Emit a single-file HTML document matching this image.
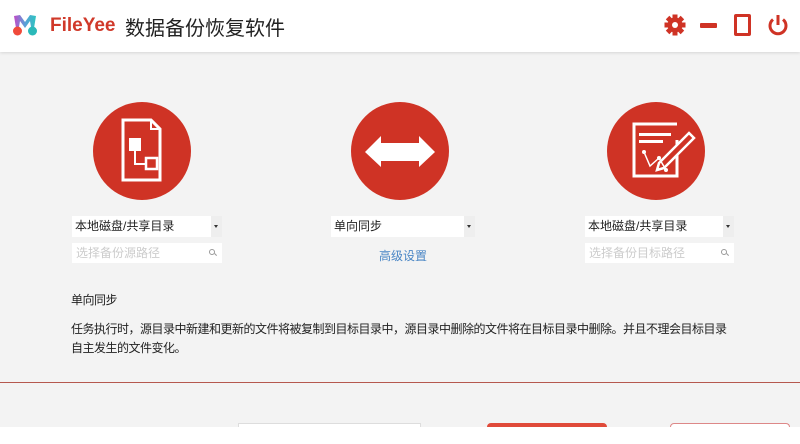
<!DOCTYPE html>
<html><head><meta charset="utf-8"><style>
*{margin:0;padding:0;box-sizing:border-box}
html,body{width:800px;height:444px;overflow:hidden}
body{background:#f3f3f3;font-family:"Liberation Sans","Noto Sans CJK SC",sans-serif;position:relative}
.hdr{position:absolute;left:0;top:0;width:800px;height:52px;background:#fff;box-shadow:0 1px 3px rgba(0,0,0,.12)}
.abs{position:absolute}
.circ{position:absolute;width:98px;height:98px;border-radius:50%;background:#cf3325}
.sel{position:absolute;height:21px;background:#fff;font-size:12px;color:#222;line-height:21px;padding-left:3px}
.sel i{position:absolute;right:0;top:0;width:11px;height:21px;background:#eee}
.sel i:after{content:"";position:absolute;left:3px;top:9px;border:2.5px solid transparent;border-top:3px solid #333}
.inp{position:absolute;height:20px;background:#fff;font-size:12px;color:#ccc;line-height:20px;padding-left:4px}
.inp b{position:absolute;right:7px;top:6px;width:6px;height:6px;border:1.3px solid #999;border-radius:50%}
.inp b:after{content:"";position:absolute;left:4px;top:4px;width:3px;height:1.3px;background:#999;transform:rotate(45deg)}
.txt{position:absolute;left:71px;font-size:12px;color:#222;white-space:nowrap;letter-spacing:-0.5px}
</style></head><body>
<div class="hdr">
<svg class="abs" style="left:11px;top:14px" width="28" height="24" viewBox="0 0 28 24">
<defs><linearGradient id="g" x1="0" y1="0" x2="1" y2="0"><stop offset="0" stop-color="#c04bc8"/><stop offset=".5" stop-color="#5aa0d8"/><stop offset="1" stop-color="#2ec4c0"/></linearGradient></defs>
<path d="M3 2 L9 1 L14 8 L19 1 L25 2 L23 14 L20 13 L19 7 L14 14 L9 7 L8 13 L5 14Z" fill="url(#g)"/>
<circle cx="6.5" cy="17" r="4.5" fill="#f04a3a"/><circle cx="21.5" cy="17" r="4.5" fill="#2bb9b9"/>
</svg>
<div class="abs" style="left:50px;top:15px;font-size:19px;font-weight:bold;color:#d0392a">FileYee</div>
<div class="abs" style="left:125px;top:12px;font-size:20px;color:#222">数据备份恢复软件</div>
<svg class="abs" style="left:663px;top:13px" width="24" height="24" viewBox="0 0 24 24"><g fill="#cf3325"><circle cx="12" cy="12" r="7.5"/><g id="t"><rect x="9.5" y="1.5" width="5" height="5"/><rect x="9.5" y="17.5" width="5" height="5"/></g><use href="#t" transform="rotate(45 12 12)"/><use href="#t" transform="rotate(90 12 12)"/><use href="#t" transform="rotate(135 12 12)"/></g><circle cx="12" cy="12" r="3" fill="#fff"/></svg>
<div class="abs" style="left:700px;top:23px;width:17px;height:5px;background:#cf3325;border-radius:1px"></div>
<div class="abs" style="left:734px;top:14px;width:17px;height:22px;border:3px solid #cf3325;border-radius:2px"></div>
<svg class="abs" style="left:766px;top:13px" width="24" height="24" viewBox="0 0 24 24"><path d="M7 6.5 A8 8 0 1 0 17 6.5" fill="none" stroke="#cf3325" stroke-width="3"/><rect x="10.5" y="2" width="3" height="10" fill="#cf3325"/></svg>
</div>

<div class="circ" style="left:93px;top:102px"></div>
<svg class="abs" style="left:93px;top:102px" width="98" height="98" viewBox="93 102 98 98">
<path d="M123 120 H151 L160 129 V180 H123Z" fill="none" stroke="#fff" stroke-width="3"/>
<path d="M151 120 V129 H160" fill="none" stroke="#fff" stroke-width="2"/>
<rect x="129" y="138" width="12" height="13" fill="#fff"/>
<path d="M135 151 V164 H146" fill="none" stroke="#fff" stroke-width="2"/>
<rect x="146" y="158" width="11" height="11" fill="none" stroke="#fff" stroke-width="2.5"/>
</svg>

<div class="circ" style="left:351px;top:102px"></div>
<svg class="abs" style="left:351px;top:102px" width="98" height="98" viewBox="351 102 98 98">
<path d="M365 152 L381 136 V143 H419 V136 L435 152 L419 167 V161 H381 V167Z" fill="#fff"/>
</svg>

<div class="circ" style="left:607px;top:102px"></div>
<svg class="abs" style="left:607px;top:102px" width="98" height="98" viewBox="607 102 98 98">
<path d="M677 140 V176 H634 V124 H677" fill="none" stroke="#fff" stroke-width="3"/>
<rect x="639" y="133" width="32" height="3" fill="#fff"/><rect x="639" y="140" width="24" height="3" fill="#fff"/>
<path d="M689 133 L694 138 L664 168 L657 170 L659 163Z" fill="#cf3325" stroke="#fff" stroke-width="2.5"/>
<path d="M644 152 L650 166 L659 158 L666 170" fill="none" stroke="#fff" stroke-width="1.5"/>
<circle cx="644" cy="152" r="2" fill="#fff"/><circle cx="659" cy="158" r="2" fill="#fff"/><circle cx="666" cy="170" r="2" fill="#fff"/>
</svg>

<div class="sel" style="left:72px;top:216px;width:150px">本地磁盘/共享目录<i></i></div>
<div class="inp" style="left:72px;top:243px;width:150px">选择备份源路径<b></b></div>
<div class="sel" style="left:331px;top:216px;width:144px">单向同步<i></i></div>
<div class="abs" style="left:379px;top:247px;font-size:12px;color:#4a86c5">高级设置</div>
<div class="sel" style="left:585px;top:216px;width:149px">本地磁盘/共享目录<i></i></div>
<div class="inp" style="left:585px;top:243px;width:149px">选择备份目标路径<b></b></div>

<div class="txt" style="top:291px">单向同步</div>
<div class="txt" style="top:320px;line-height:19px">任务执行时，源目录中新建和更新的文件将被复制到目标目录中，源目录中删除的文件将在目标目录中删除。并且不理会目标目录<br>自主发生的文件变化。</div>

<div class="abs" style="left:0;top:382px;width:800px;height:1px;background:#b5584e"></div>
<div class="abs" style="left:238px;top:423px;width:183px;height:4px;background:#fff;border:1px solid #ddd;border-bottom:0"></div>
<div class="abs" style="left:487px;top:423px;width:120px;height:4px;background:#e04a3a;border-radius:6px 6px 0 0"></div>
<div class="abs" style="left:670px;top:423px;width:120px;height:4px;background:#fff;border:1px solid #d88;border-bottom:0;border-radius:6px 6px 0 0"></div>
<div class="abs" style="left:0;top:427px;width:800px;height:17px;background:#fff"></div>
</body></html>
